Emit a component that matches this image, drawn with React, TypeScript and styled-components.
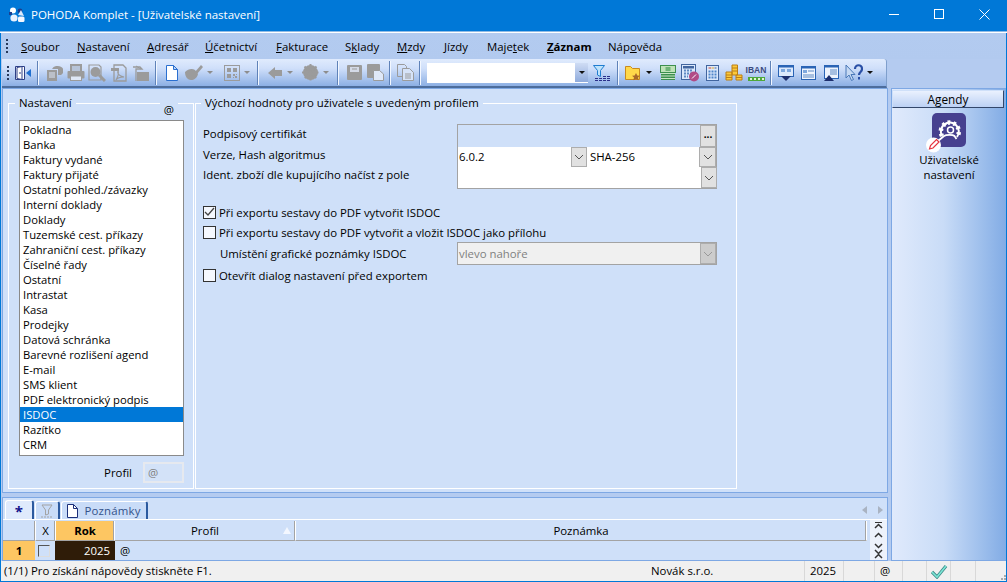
import React from 'react';
import styled, { createGlobalStyle } from 'styled-components';

const GlobalStyle = createGlobalStyle`
  html, body { margin: 0; padding: 0; overflow: hidden; background: #fff; }
  body { font-family: "Open Sans", "Noto Sans", "Liberation Sans", sans-serif; font-size: 11.4px; color: #000; }
  * { box-sizing: border-box; }
  fieldset { margin: 0; min-width: 0; }
`;

const Window = styled.div`
  width: 1007px;
  height: 582px;
  display: flex;
  flex-direction: column;
  border: 1px solid #0078d7;
  border-top: 0;
  background: #b4cbf0;
`;

const TitleBar = styled.div`
  height: 33px;
  margin: 0 -1px;
  display: flex;
  align-items: center;
  background: #0078d7;
  border-bottom: 1px solid #fff;
  box-shadow: inset 0 -1px 0 #8fbbe6;
  color: #fff;
  padding: 0 0 3px 9px;
`;

const TitleText = styled.span`
  margin-left: 6px;
  font-size: 11.5px;
  flex: 1;
`;

const WinButtons = styled.div`
  display: flex;
  align-items: center;
`;

const WinButton = styled.div`
  width: 45px;
  height: 20px;
  display: flex;
  align-items: center;
  justify-content: center;
`;

const MenuBar = styled.div`
  height: 26px;
  display: flex;
  align-items: center;
  padding-left: 5px;
  background: linear-gradient(#b3cbf0, #b2caef);
`;

const Grip = styled.div<{ $h: number }>`
  width: 2px;
  height: ${(p) => p.$h}px;
  background: repeating-linear-gradient(to bottom, #27395a 0 2px, transparent 2px 4px);
`;

const MenuItem = styled.div<{ $w: number; $bold?: boolean }>`
  width: ${(p) => p.$w}px;
  flex: none;
  font-weight: ${(p) => (p.$bold ? 700 : 400)};
  white-space: nowrap;
`;

const MenuList = styled.div`
  display: flex;
  margin-left: 13px;
`;

const ToolRow = styled.div`
  height: 29px;
  display: flex;
  padding-left: 1px;
`;

const Toolbar = styled.div`
  width: 885px;
  height: 29px;
  display: flex;
  align-items: center;
  background: linear-gradient(#e0ebfd, #cfdffa 35%, #8cafe4);
  border-bottom: 2px solid #4d6d9c;
  border-right: 1px solid #7f9fcc;
  border-radius: 0 3px 0 0;
`;

const ToolSlot = styled.div<{ $w: number; $ml?: number }>`
  width: ${(p) => p.$w}px;
  margin-left: ${(p) => p.$ml ?? 0}px;
  flex: none;
  height: 24px;
  display: flex;
  align-items: center;
  justify-content: center;
`;

const ToolSep = styled.div`
  width: 2px;
  height: 24px;
  background: linear-gradient(90deg, #5f82b8 50%, #f2f7ff 50%);
`;

const DropArrow = styled.div<{ $dark?: boolean }>`
  width: 0;
  height: 0;
  border-left: 3px solid transparent;
  border-right: 3px solid transparent;
  border-top: 3px solid ${(p) => (p.$dark ? '#111' : '#8d8d8d')};
`;

const SearchBox = styled.div`
  width: 161px;
  height: 20px;
  margin-left: 3px;
  flex: none;
  background: #fff;
  display: flex;
  justify-content: flex-end;
`;

const SearchButton = styled.div`
  width: 13px;
  display: flex;
  align-items: center;
  justify-content: center;
  background: linear-gradient(#cfdcf4, #8fabdc);
  border-bottom: 1px solid #fff;
`;

const Workspace = styled.div`
  flex: 1;
  min-height: 0;
  display: flex;
  padding-left: 1px;
`;

const MainColumn = styled.div`
  width: 886px;
  display: flex;
  flex-direction: column;
  gap: 4px;
`;

const Panel = styled.div`
  border: 1px solid #7ea8e4;
  background: #cfe0f9;
`;

const TopPanel = styled(Panel)`
  height: 405px;
  display: flex;
  padding: 6px 0 0 5px;
  gap: 1px;
`;

const Group = styled.fieldset<{ $w: number }>`
  width: ${(p) => p.$w}px;
  height: 394px;
  border: 1px solid #fff;
  padding: 0;
  position: relative;
  flex: none;
`;

const Legend = styled.legend<{ $ml: number }>`
  margin-left: ${(p) => p.$ml}px;
  padding: 0 4px;
  height: 16px;
  line-height: 16px;
  white-space: nowrap;
`;

const ProfileAt = styled.div`
  position: absolute;
  top: -9px;
  right: 15px;
  background: #cfe0f9;
  padding: 0 4px;
  line-height: 16px;
`;

const ListBox = styled.div`
  width: 165px;
  height: 336px;
  margin: 9px 0 0 10px;
  padding-top: 1px;
  background: #fff;
  border: 1px solid #8a8a8a;
`;

const ListItem = styled.div<{ $selected?: boolean }>`
  height: 15px;
  line-height: 15px;
  padding-left: 3px;
  font-size: 11.25px;
  white-space: nowrap;
  background: ${(p) => (p.$selected ? '#0078d7' : 'transparent')};
  color: ${(p) => (p.$selected ? '#fff' : '#000')};
`;

const ProfileRow = styled.div`
  display: flex;
  align-items: center;
  justify-content: flex-end;
  gap: 11px;
  margin: 6px 9px 0 0;
`;

const ProfileField = styled.div`
  width: 41px;
  height: 21px;
  border: 2px solid #e6e9ef;
  background: #d3e2f8;
  color: #808080;
  padding: 1px 0 0 3px;
`;

const FormBody = styled.div`
  padding: 13px 0 0 7px;
`;

const FieldsBlock = styled.div`
  display: flex;
`;

const LabelColumn = styled.div`
  width: 254px;
  display: flex;
  flex-direction: column;
`;

const Label = styled.div<{ $indent?: boolean; $mb?: number }>`
  height: 20px;
  line-height: 20px;
  white-space: nowrap;
  padding-left: ${(p) => (p.$indent ? 17 : 0)}px;
  margin-bottom: ${(p) => p.$mb ?? 0}px;
`;

const FieldBox = styled.div`
  width: 260px;
  height: 65px;
  border: 1px solid #a3a3a3;
  display: flex;
  flex-direction: column;
`;

const CertRow = styled.div`
  height: 22px;
  display: flex;
  justify-content: flex-end;
`;

const ValueRow = styled.div`
  height: 21px;
  display: flex;
  background: #fff;
  align-items: center;
  padding-left: 1px;
`;

const ValueText = styled.div<{ $w: number }>`
  width: ${(p) => p.$w}px;
  flex: none;
`;

const SquareButton = styled.div<{ $w?: number; $disabled?: boolean }>`
  width: ${(p) => p.$w ?? 16}px;
  height: 100%;
  flex: none;
  display: flex;
  align-items: center;
  justify-content: center;
  border: 1px solid #adadad;
  background: ${(p) => (p.$disabled ? '#cccccc' : '#e1e1e1')};
`;

const Dots = styled.div`
  font-weight: 700;
  font-size: 10px;
  line-height: 10px;
  margin-top: -3px;
`;

const ChecksBlock = styled.div`
  margin-top: 13px;
`;

const CheckRow = styled.div`
  height: 20px;
  display: flex;
  align-items: center;
  gap: 3px;
`;

const CheckBox = styled.div`
  width: 13px;
  height: 13px;
  flex: none;
  background: #f5f8fe;
  border: 1px solid #333;
  display: flex;
  align-items: center;
  justify-content: center;
`;

const SelectRow = styled.div`
  height: 23px;
  display: flex;
  align-items: center;
`;

const DisabledSelect = styled.div`
  width: 260px;
  height: 23px;
  border: 1px solid #a3a3a3;
  background: #f0f0f0;
  color: #808080;
  display: flex;
  align-items: center;
  justify-content: space-between;
  padding-left: 1px;
`;

const BottomPanel = styled(Panel)`
  flex: 1;
  display: flex;
  flex-direction: column;
`;

const TabStrip = styled.div`
  height: 22px;
  display: flex;
  align-items: flex-end;
  padding-left: 2px;
  gap: 1px;
  border-bottom: 1px solid #fff;
`;

const Tab = styled.div<{ $w: number; $active?: boolean }>`
  width: ${(p) => p.$w}px;
  height: ${(p) => (p.$active ? 19 : 18)}px;
  display: flex;
  align-items: center;
  justify-content: center;
  gap: 6px;
  border-top: 1px solid #fff;
  border-left: 1px solid #fff;
  border-right: 2px solid #2c5a9f;
  border-radius: 3px 3px 0 0;
  background: ${(p) => (p.$active ? '#dfeafc' : '#c9dcf8')};
  color: #33528a;
  letter-spacing: 0.2px;
`;

const TabStar = styled.span`
  color: #14148c;
  font-weight: 700;
  font-size: 15px;
  line-height: 15px;
  margin-top: 3px;
`;

const TabArrows = styled.div`
  margin: 0 4px 5px auto;
  display: flex;
  gap: 11px;
`;

const TabArrow = styled.div<{ $right?: boolean }>`
  width: 0;
  height: 0;
  border-top: 4px solid transparent;
  border-bottom: 4px solid transparent;
  ${(p) => (p.$right ? 'border-left: 5px solid #a9b3c2;' : 'border-right: 5px solid #a9b3c2;')}
`;

const GridWrap = styled.div`
  flex: 1;
  display: flex;
  min-height: 0;
`;

const Grid = styled.div`
  flex: 1;
  margin-top: 1px;
  display: grid;
  grid-template-columns: 33px 20px 59px 181px 571px;
  grid-template-rows: 20px 19px;
`;

const HeadCell = styled.div<{ $sorted?: boolean }>`
  display: flex;
  align-items: center;
  justify-content: center;
  position: relative;
  font-weight: ${(p) => (p.$sorted ? 700 : 400)};
  background: ${(p) => (p.$sorted ? '#fdc662' : '#cfe0f9')};
  border-right: 1px solid #fff;
  border-bottom: 1px solid #a3a3a3;
  box-shadow: inset -1px 0 0 #a3a3a3;
`;

const SortMark = styled.span`
  position: absolute;
  right: 4px;
  top: 6px;
  width: 0;
  height: 0;
  border-left: 4px solid transparent;
  border-right: 4px solid transparent;
  border-bottom: 7px solid #f3f7ff;
`;

const RowNumber = styled.div`
  background: #fdc662;
  font-weight: 700;
  display: flex;
  align-items: center;
  justify-content: center;
  margin-right: 1px;
`;

const RowCheck = styled.div`
  display: flex;
  align-items: center;
  padding-left: 2px;
`;

const RowCheckBox = styled(CheckBox)`
  width: 12px;
  height: 12px;
  background: #cfe0f9;
  border-color: #555 #ddd #ddd #555;
  border-width: 1.5px;
`;

const YearCell = styled.div`
  background: #2f1c08;
  color: #fff;
  text-align: right;
  padding-right: 5px;
  line-height: 19px;
  margin-left: -1px;
`;

const ProfileCell = styled.div`
  padding-left: 5px;
  line-height: 19px;
`;

const Scroller = styled.div`
  width: 17px;
  margin-left: 3px;
  background: #edf2fb;
  display: flex;
  align-items: center;
  justify-content: center;
`;

const AgendaPanel = styled(Panel)`
  width: 115px;
  margin-left: 3px;
  padding: 1px 0 0 0;
  border-right: 0;
  display: flex;
  flex-direction: column;
  align-items: center;
  background: linear-gradient(90deg, #e0eafc, #c9dcf7 45%, #82ace5);
`;

const AgendaHeader = styled.div`
  width: 112px;
  height: 18px;
  line-height: 17px;
  text-align: center;
  font-size: 11.8px;
  background: linear-gradient(#eaf1fe, #bcd1f4);
  border: 1px solid #cfe0f9;
  border-bottom: 1px solid #33476a;
  border-right: 1px solid #33476a;
  margin-left: -2px;
`;

const AgendaIcon = styled.div`
  margin-top: 5px;
  width: 46px;
  height: 39px;
`;

const AgendaLabel = styled.div`
  text-align: center;
  line-height: 15px;
`;

const StatusBar = styled.div`
  height: 20px;
  display: flex;
  align-items: center;
  background: #f0f0f0;
`;

const StatusCell = styled.div<{ $w: number; $pad?: number; $line?: boolean }>`
  width: ${(p) => p.$w}px;
  height: 20px;
  line-height: 20px;
  flex: none;
  padding-left: ${(p) => p.$pad ?? 0}px;
  border-left: ${(p) => (p.$line ? '1px solid #d8d8d8' : '0')};
  white-space: nowrap;
  display: flex;
  align-items: center;
`;

const GripCorner = styled.div`
  flex: 1;
  height: 20px;
  display: flex;
  align-items: flex-end;
  justify-content: flex-end;
`;

const gray = '#9b9b9b';

const Ic: React.FC<{ w?: number; h?: number; children: React.ReactNode }> = ({ w = 18, h = 18, children }) => (
  <svg width={w} height={h} viewBox={`0 0 ${w} ${h}`} fill="none">
    {children}
  </svg>
);

const AppLogo = () => (
  <Ic w={16} h={16}>
    <circle cx="4" cy="3.5" r="3" fill="#fff" />
    <circle cx="11" cy="4" r="2.4" fill="#1b3e8f" />
    <path d="M9 8l3-5 3 6z" fill="#dce8fa" />
    <circle cx="5" cy="11" r="3.6" fill="#eaf1fd" />
    <rect x="9" y="9.5" width="6.5" height="5.5" rx="1.5" fill="#f4f7ff" />
    <rect x="0" y="5" width="3" height="3" fill="#1b3e8f" />
  </Ic>
);

const DoorIcon = () => (
  <Ic>
    <path d="M1.5 2.5h9v13h-9z" fill="#fff" stroke="#2c3f86" />
    <path d="M3 3.5l5-1v13l-5-1z" fill="#fdfdfd" stroke="#2c3f86" />
    <rect x="5.5" y="8" width="1" height="2" fill="#2c3f86" />
    <path d="M12 9l5-4v8z" fill="#1f6fd0" />
  </Ic>
);

const CopySheetsIcon = () => (
  <Ic>
    <path d="M7 5a6 5 0 1 1 9 6h-3V5z" fill={gray} />
    <path d="M2 6h10v11H2z" fill={gray} />
    <path d="M4 9h6M4 11h6M4 13h6" stroke="#dbe5f6" />
  </Ic>
);

const PrinterIcon = () => (
  <Ic>
    <path d="M4 1h10v7H4z" fill="#b7c4d8" stroke={gray} strokeWidth="2" />
    <rect x="0.5" y="7" width="17" height="7.500" rx="1" fill={gray} />
    <rect x="3.500" y="12" width="11" height="4.500" fill="#dfe8f6" stroke={gray} />
  </Ic>
);

const PreviewIcon = () => (
  <Ic>
    <path d="M1 1h10l2 2v13H1z" stroke={gray} strokeWidth="1.200" />
    <circle cx="7.500" cy="8" r="5" fill={gray} />
    <path d="M11 11l6 6" stroke={gray} strokeWidth="3" />
  </Ic>
);

const PdfIcon = () => (
  <Ic>
    <path d="M4 1h9l3 3v13H4z" stroke={gray} strokeWidth="1.300" />
    <path d="M1 4h8v3H1z" fill={gray} />
    <path d="M8 6c-1 4 1 6 6 7-3 0-6 0-8 3 2-3 3-6 2-10z" stroke={gray} strokeWidth="1.200" />
  </Ic>
);

const MailDocIcon = () => (
  <Ic>
    <path d="M1 3h7l2 2H4v12" stroke={gray} strokeWidth="1.300" />
    <path d="M5 8h12v9H5z" fill={gray} />
    <path d="M4 2l5 3" stroke={gray} />
  </Ic>
);

const NewDocIcon = () => (
  <Ic w={14}>
    <path d="M1.500 1.500h7l4 4v11h-11z" fill="#fff" stroke="#2a6fd0" />
    <path d="M8.500 1.500v4h4z" fill="#bcd4f6" stroke="#2a6fd0" />
  </Ic>
);

const BrushIcon = () => (
  <Ic>
    <path d="M0 8c3-3 7-4 10-2l3 4c-1 4-4 6-7 6-4 0-6-4-6-8z" fill={gray} />
    <path d="M10 8l6-7 2 2-6 7z" fill={gray} />
  </Ic>
);

const QrIcon = () => (
  <Ic w={16} h={16}>
    <rect x="0.500" y="0.500" width="15" height="15" stroke={gray} />
    <path d="M3 3h4v4H3zM9 3h4v4H9zM3 9h4v4H3z" fill={gray} />
    <path d="M9 9h2v2H9zM12 9h1v1h-1zM11 11h2v2h-2zM9 12h1v1H9z" fill={gray} />
  </Ic>
);

const BackIcon = () => (
  <Ic w={14} h={14}>
    <path d="M0 7l7-6v3h7v6H7v3z" fill={gray} />
  </Ic>
);

const GearBlobIcon = () => (
  <Ic w={17} h={17}>
    <circle cx="8.500" cy="8.500" r="7.500" fill={gray} />
    <path d="M8.500 0v17M0 8.500h17M2.500 2.500l12 12M14.500 2.500l-12 12" stroke={gray} strokeWidth="2" strokeDasharray="2.500 1" />
  </Ic>
);

const SaveIcon = () => (
  <Ic w={15} h={15}>
    <path d="M0 1a1 1 0 0 1 1-1h13a1 1 0 0 1 1 1v13a1 1 0 0 1-1 1H1a1 1 0 0 1-1-1z" fill={gray} />
    <path d="M3 2h9v5H3z" fill="#e2eafa" opacity="0.8" />
    <path d="M5 4h5" stroke={gray} />
  </Ic>
);

const SaveAsIcon = () => (
  <Ic w={17} h={17}>
    <rect x="0" y="0" width="13" height="14" rx="1" fill={gray} />
    <path d="M6.500 6.500h6l4 3.500v6.500h-10z" fill="#dfe8f8" stroke={gray} />
  </Ic>
);

const DocsIcon = () => (
  <Ic w={17} h={17}>
    <path d="M0.500 0.500h7l2 2v10h-9z" stroke={gray} />
    <path d="M5.500 4.500h7l4 4v8h-11z" fill="#d6e3f8" stroke={gray} />
    <path d="M8 10h6M8 12h6M8 14h6" stroke={gray} />
  </Ic>
);

const FilterIcon = () => (
  <Ic>
    <path d="M0.500 1.500h11l-4 5v6l-3-1.500V6.500z" fill="#bfe3fb" stroke="#1f7dd0" />
    <path d="M2 14.500h15M2 16.500h15" stroke="#2a2f8a" strokeDasharray="3 1" />
    <path d="M10 12.500h7" stroke="#2a2f8a" strokeDasharray="3 1" />
  </Ic>
);

const FolderIcon = () => (
  <Ic w={16} h={16}>
    <path d="M0.500 1.500h5l2 2h7v11h-14z" fill="#ffd84a" stroke="#c98a1d" />
    <path d="M11 8l1.300 2.500 2.700.3-2 1.800.6 2.700-2.600-1.400-2.600 1.400.6-2.700-2-1.800 2.700-.3z" fill="#a8682a" />
  </Ic>
);

const MoneyIcon = () => (
  <Ic w={16} h={16}>
    <path d="M1 6h14v9H1z" fill="#3d8f4f" />
    <path d="M1 8.500h14M1 11h14M1 13.500h14" stroke="#c9e6c4" />
    <rect x="0.500" y="0.500" width="15" height="7" fill="#bfe2b8" stroke="#3d8f4f" />
    <rect x="5.500" y="2" width="5" height="4" fill="#6fb477" />
  </Ic>
);

const CalcPercentIcon = () => (
  <Ic>
    <rect x="0.500" y="0.500" width="14" height="15" fill="#dbe8fb" stroke="#41659f" />
    <rect x="2" y="2" width="11" height="2.500" fill="#41659f" />
    <path d="M3 6.500h9M3 9.500h9M3 12.500h4" stroke="#5f8ac4" strokeWidth="2" strokeDasharray="2 1" />
    <circle cx="13" cy="12.500" r="5" fill="#b14b86" />
    <path d="M11 14.500l4-4" stroke="#fff" />
  </Ic>
);

const CalcIcon = () => (
  <Ic w={13} h={16}>
    <rect x="0.500" y="0.500" width="12" height="15" fill="#dbe8fb" stroke="#41659f" />
    <path d="M2.500 3h2.500" stroke="#d0453b" />
    <path d="M5.500 3h2.500" stroke="#e3a92a" />
    <path d="M8.500 3h2" stroke="#41659f" />
    <path d="M2.500 6.500h8M2.500 9.500h8M2.500 12.500h8" stroke="#4f85c9" strokeWidth="2" strokeDasharray="2 1" />
  </Ic>
);

const CoinsIcon = () => (
  <Ic>
    <path d="M7 1h5.500v10H7zM1 8h6v8H1zM11 11h6v5h-6z" fill="#fcc93a" stroke="#bb7e15" />
    <path d="M7 4h5.500M7 7h5.500M1 11h6M1 13.500h6M11 13.500h6" stroke="#bb7e15" />
  </Ic>
);

const IbanLabel = styled.div`
  width: 18px;
  height: 16px;
  display: flex;
  flex-direction: column;
  align-items: center;
  font-family: "Liberation Sans", sans-serif;
  font-size: 8.5px;
  line-height: 11px;
  font-weight: 700;
  color: #3a4a80;
  white-space: nowrap;
`;

const IbanBar = styled.div`
  width: 17px;
  height: 4px;
  margin-top: 1px;
  background: repeating-linear-gradient(90deg, #4ea83a 0 1px, #dff2d5 1px 3px, #4ea83a 3px 4px);
  border: 1px solid #4ea83a;
`;

const IbanIcon = () => (
  <IbanLabel>
    IBAN
    <IbanBar />
  </IbanLabel>
);

const WinDownIcon = () => (
  <Ic w={16} h={16}>
    <rect x="0.500" y="0.500" width="15" height="11" fill="#dce9fc" stroke="#2a64b5" />
    <rect x="0" y="0" width="16" height="2.500" fill="#2a64b5" />
    <rect x="3" y="4" width="4" height="3" fill="#7ea8de" />
    <rect x="9" y="4" width="4" height="3" fill="#7ea8de" />
    <path d="M3 11h10l-5 5z" fill="#1d2f6e" />
  </Ic>
);

const WinListIcon = () => (
  <Ic w={15} h={14}>
    <rect x="0.500" y="0.500" width="14" height="13" fill="#eef4fd" stroke="#2a64b5" />
    <rect x="0" y="0" width="15" height="2.500" fill="#2a64b5" />
    <rect x="2" y="4" width="4" height="3" fill="#7ea8de" />
    <path d="M7 5h6M2 9h11M2 11h11" stroke="#5f8ac4" />
  </Ic>
);

const WinUpIcon = () => (
  <Ic w={16} h={16}>
    <rect x="1.500" y="0.500" width="14" height="13" fill="#eef4fd" stroke="#2a64b5" />
    <rect x="1" y="0" width="15" height="2.500" fill="#2a64b5" />
    <path d="M7 5h7M7 7h7M7 9h7" stroke="#5f8ac4" />
    <path d="M1 16l5-6 5 6z" fill="#1d2f6e" />
  </Ic>
);

const HelpIcon = () => (
  <Ic>
    <path d="M1 1v13l3-3 2.500 5.500 2-1-2.500-5h4z" fill="#c6d9f3" stroke="#4a79b8" />
    <path d="M10 5c0-5 7-5 7 0 0 3-3 3-3 6" stroke="#2a50a6" strokeWidth="2.200" />
    <rect x="13" y="13" width="2" height="2.500" fill="#2a50a6" />
  </Ic>
);

const Chevron: React.FC<{ color?: string }> = ({ color = '#555' }) => (
  <svg width="10" height="6" viewBox="0 0 10 6" fill="none">
    <path d="M1 1l4 4 4-4" stroke={color} />
  </svg>
);

const CheckMark = () => (
  <svg width="11" height="10" viewBox="0 0 11 10" fill="none">
    <path d="M1 5l3 3 6-7" stroke="#444" strokeWidth="1.300" />
  </svg>
);

const AgendaGraphic = () => (
  <svg width="46" height="40" viewBox="0 0 46 40" fill="none">
    <rect x="6" y="0" width="34" height="34" rx="5" fill="#46408f" />
    <path d="M16 23a9 9 0 1 1 15 1" stroke="#fff" strokeWidth="2" />
    <path d="M16 23a9 9 0 1 1 15 1" stroke="#fff" strokeWidth="4.500" strokeDasharray="2.500 3" />
    <path d="M18 13a6 6 0 0 1 4-3" stroke="#fff" strokeWidth="1.300" />
    <circle cx="24.500" cy="17" r="3" stroke="#fff" strokeWidth="1.500" />
    <path d="M12 28l6-5c2-1.500 9-1.500 10.500 0l2 3" stroke="#fff" strokeWidth="1.800" />
    <circle cx="7.500" cy="32" r="7.500" fill="#fff" />
    <path d="M3.500 36l1-3.500 6-6 2.500 2.500-6 6z" fill="#fff" stroke="#e5323f" strokeWidth="1.200" />
  </svg>
);

const ScrollGraphic = () => (
  <svg width="9" height="37" viewBox="0 0 9 37" fill="none">
    <path d="M1 0.500h7" stroke="#333" />
    <path d="M1 6l3.500-3.500L8 6" stroke="#333" strokeWidth="1.500" />
    <path d="M1 15l3.500-3.500L8 15" stroke="#333" strokeWidth="1.500" />
    <path d="M1 22l3.500 3.500L8 22" stroke="#333" strokeWidth="1.500" />
    <path d="M1 28l3.500 3.500L8 28M1 36l3.500-3.500L8 36" stroke="#333" strokeWidth="1.500" />
  </svg>
);

const StatusCheck = () => (
  <svg width="17" height="15" viewBox="0 0 17 15" fill="none">
    <path d="M1 8l5 5 9-11" stroke="#3d8a88" strokeWidth="3.200" />
    <path d="M1 8l5 5 9-11" stroke="#7ce6d6" strokeWidth="1.600" />
  </svg>
);

const GripDots = () => (
  <svg width="10" height="10" viewBox="0 0 10 10" fill="#a9a9a9">
    <rect x="7" y="1" width="2" height="2" />
    <rect x="4" y="4" width="2" height="2" />
    <rect x="7" y="4" width="2" height="2" />
    <rect x="1" y="7" width="2" height="2" />
    <rect x="4" y="7" width="2" height="2" />
    <rect x="7" y="7" width="2" height="2" />
  </svg>
);

const menu: { label: React.ReactNode; w: number; bold?: boolean }[] = [
  { label: <><u>S</u>oubor</>, w: 56 },
  { label: <><u>N</u>astavení</>, w: 70 },
  { label: <><u>A</u>dresář</>, w: 58 },
  { label: <><u>Ú</u>četnictví</>, w: 71 },
  { label: <><u>F</u>akturace</>, w: 69 },
  { label: <>S<u>k</u>lady</>, w: 52 },
  { label: <><u>M</u>zdy</>, w: 47 },
  { label: <><u>J</u>ízdy</>, w: 43 },
  { label: <>Maje<u>t</u>ek</>, w: 60 },
  { label: <><u>Z</u>áznam</>, w: 61, bold: true },
  { label: <>Náp<u>o</u>věda</>, w: 70 },
];

const settings = [
  'Pokladna', 'Banka', 'Faktury vydané', 'Faktury přijaté', 'Ostatní pohled./závazky', 'Interní doklady',
  'Doklady', 'Tuzemské cest. příkazy', 'Zahraniční cest. příkazy', 'Číselné řady', 'Ostatní', 'Intrastat',
  'Kasa', 'Prodejky', 'Datová schránka', 'Barevné rozlišení agend', 'E-mail', 'SMS klient',
  'PDF elektronický podpis', 'ISDOC', 'Razítko', 'CRM',
];

const App: React.FC = () => (
  <>
    <GlobalStyle />
    <Window>
      <TitleBar>
        <AppLogo />
        <TitleText>POHODA Komplet - [Uživatelské nastavení]</TitleText>
        <WinButtons>
          <WinButton>
            <svg width="11" height="11" fill="none"><path d="M0 5.500h10" stroke="#fff" /></svg>
          </WinButton>
          <WinButton>
            <svg width="11" height="11" fill="none"><rect x="0.500" y="0.500" width="9" height="9" stroke="#fff" /></svg>
          </WinButton>
          <WinButton>
            <svg width="11" height="11" fill="none"><path d="M0.500 0.500l10 10M10.500 0.500l-10 10" stroke="#fff" /></svg>
          </WinButton>
        </WinButtons>
      </TitleBar>

      <MenuBar>
        <Grip $h={14} />
        <MenuList>
          {menu.map((m, i) => (
            <MenuItem key={i} $w={m.w} $bold={m.bold}>{m.label}</MenuItem>
          ))}
        </MenuList>
      </MenuBar>

      <ToolRow>
        <Toolbar>
          <ToolSlot $w={11}><Grip $h={14} /></ToolSlot>
          <ToolSlot $w={20}><DoorIcon /></ToolSlot>
          <ToolSlot $w={10}><ToolSep /></ToolSlot>
          <ToolSlot $w={22}><CopySheetsIcon /></ToolSlot>
          <ToolSlot $w={21}><PrinterIcon /></ToolSlot>
          <ToolSlot $w={22}><PreviewIcon /></ToolSlot>
          <ToolSlot $w={22}><PdfIcon /></ToolSlot>
          <ToolSlot $w={21}><MailDocIcon /></ToolSlot>
          <ToolSlot $w={9}><ToolSep /></ToolSlot>
          <ToolSlot $w={23}><NewDocIcon /></ToolSlot>
          <ToolSlot $w={22}><BrushIcon /></ToolSlot>
          <ToolSlot $w={9}><DropArrow /></ToolSlot>
          <ToolSlot $w={22} $ml={7}><QrIcon /></ToolSlot>
          <ToolSlot $w={8}><DropArrow /></ToolSlot>
          <ToolSlot $w={13}><ToolSep /></ToolSlot>
          <ToolSlot $w={21}><BackIcon /></ToolSlot>
          <ToolSlot $w={10}><DropArrow /></ToolSlot>
          <ToolSlot $w={22} $ml={4}><GearBlobIcon /></ToolSlot>
          <ToolSlot $w={10}><DropArrow /></ToolSlot>
          <ToolSlot $w={13}><ToolSep /></ToolSlot>
          <ToolSlot $w={20}><SaveIcon /></ToolSlot>
          <ToolSlot $w={22}><SaveAsIcon /></ToolSlot>
          <ToolSlot $w={8}><ToolSep /></ToolSlot>
          <ToolSlot $w={22}><DocsIcon /></ToolSlot>
          <ToolSlot $w={8}><ToolSep /></ToolSlot>
          <SearchBox>
            <SearchButton><DropArrow $dark /></SearchButton>
          </SearchBox>
          <ToolSlot $w={24} $ml={2}><FilterIcon /></ToolSlot>
          <ToolSlot $w={7}><ToolSep /></ToolSlot>
          <ToolSlot $w={24}><FolderIcon /></ToolSlot>
          <ToolSlot $w={8}><DropArrow $dark /></ToolSlot>
          <ToolSlot $w={22} $ml={4}><MoneyIcon /></ToolSlot>
          <ToolSlot $w={22}><CalcPercentIcon /></ToolSlot>
          <ToolSlot $w={22}><CalcIcon /></ToolSlot>
          <ToolSlot $w={22}><CoinsIcon /></ToolSlot>
          <ToolSlot $w={22}><IbanIcon /></ToolSlot>
          <ToolSlot $w={8}><ToolSep /></ToolSlot>
          <ToolSlot $w={22}><WinDownIcon /></ToolSlot>
          <ToolSlot $w={22}><WinListIcon /></ToolSlot>
          <ToolSlot $w={23}><WinUpIcon /></ToolSlot>
          <ToolSlot $w={23}><HelpIcon /></ToolSlot>
          <ToolSlot $w={9}><DropArrow $dark /></ToolSlot>
        </Toolbar>
      </ToolRow>

      <Workspace>
        <MainColumn>
          <TopPanel>
            <Group $w={186}>
              <Legend $ml={6}>Nastavení</Legend>
              <ProfileAt>@</ProfileAt>
              <ListBox>
                {settings.map((s) => (
                  <ListItem key={s} $selected={s === 'ISDOC'}>{s}</ListItem>
                ))}
              </ListBox>
              <ProfileRow>
                Profil
                <ProfileField>@</ProfileField>
              </ProfileRow>
            </Group>
            <Group $w={542}>
              <Legend $ml={5}>Výchozí hodnoty pro uživatele s uvedeným profilem</Legend>
              <FormBody>
                <FieldsBlock>
                  <LabelColumn>
                    <Label $mb={1}>Podpisový certifikát</Label>
                    <Label>Verze, Hash algoritmus</Label>
                    <Label>Ident. zboží dle kupujícího načíst z pole</Label>
                  </LabelColumn>
                  <FieldBox>
                    <CertRow>
                      <SquareButton><Dots>...</Dots></SquareButton>
                    </CertRow>
                    <ValueRow>
                      <ValueText $w={112}>6.0.2</ValueText>
                      <SquareButton><Chevron /></SquareButton>
                      <ValueText $w={112}>&nbsp;SHA-256</ValueText>
                      <SquareButton $w={17}><Chevron /></SquareButton>
                    </ValueRow>
                    <ValueRow>
                      <ValueText $w={242} />
                      <SquareButton><Chevron /></SquareButton>
                    </ValueRow>
                  </FieldBox>
                </FieldsBlock>
                <ChecksBlock>
                  <CheckRow><CheckBox><CheckMark /></CheckBox>Při exportu sestavy do PDF vytvořit ISDOC</CheckRow>
                  <CheckRow><CheckBox />Při exportu sestavy do PDF vytvořit a vložit ISDOC jako přílohu</CheckRow>
                  <SelectRow>
                    <LabelColumn><Label $indent>Umístění grafické poznámky ISDOC</Label></LabelColumn>
                    <DisabledSelect>
                      vlevo nahoře
                      <SquareButton $disabled><Chevron color="#999" /></SquareButton>
                    </DisabledSelect>
                  </SelectRow>
                  <CheckRow><CheckBox />Otevřít dialog nastavení před exportem</CheckRow>
                </ChecksBlock>
              </FormBody>
            </Group>
          </TopPanel>

          <BottomPanel>
            <TabStrip>
              <Tab $w={29} $active><TabStar>*</TabStar></Tab>
              <Tab $w={25}>
                <svg width="12" height="14" viewBox="0 0 12 14" fill="none">
                  <path d="M1 1h10L7.500 6v4l-3 1V6z" stroke="#a3a3a3" />
                  <path d="M0 13h12" stroke="#a3a3a3" strokeDasharray="2 1" />
                </svg>
              </Tab>
              <Tab $w={87}>
                <svg width="11" height="14" viewBox="0 0 11 14" fill="none">
                  <path d="M0.500 0.500h6l4 4v9h-10z" fill="#fff" stroke="#1b2f7a" />
                  <path d="M6.500 0.500v4h4" stroke="#1b2f7a" />
                </svg>
                Poznámky
              </Tab>
              <TabArrows>
                <TabArrow />
                <TabArrow $right />
              </TabArrows>
            </TabStrip>
            <GridWrap>
              <Grid>
                <HeadCell />
                <HeadCell>X</HeadCell>
                <HeadCell $sorted>Rok</HeadCell>
                <HeadCell>Profil<SortMark /></HeadCell>
                <HeadCell>Poznámka</HeadCell>
                <RowNumber>1</RowNumber>
                <RowCheck><RowCheckBox /></RowCheck>
                <YearCell>2025</YearCell>
                <ProfileCell>@</ProfileCell>
              </Grid>
              <Scroller><ScrollGraphic /></Scroller>
            </GridWrap>
          </BottomPanel>
        </MainColumn>

        <AgendaPanel>
          <AgendaHeader>Agendy</AgendaHeader>
          <AgendaIcon><AgendaGraphic /></AgendaIcon>
          <AgendaLabel>Uživatelské<br />nastavení</AgendaLabel>
        </AgendaPanel>
      </Workspace>

      <StatusBar>
        <StatusCell $w={644} $pad={3}>(1/1) Pro získání nápovědy stiskněte F1.</StatusCell>
        <StatusCell $w={159} $pad={6}>Novák s.r.o.</StatusCell>
        <StatusCell $w={39} $pad={5} $line>2025</StatusCell>
        <StatusCell $w={31} $line />
        <StatusCell $w={28} $pad={5} $line>@</StatusCell>
        <StatusCell $w={24} $line />
        <StatusCell $w={24} $pad={4} $line><StatusCheck /></StatusCell>
        <StatusCell $w={25} $line />
        <StatusCell $w={25} $line />
        <GripCorner><GripDots /></GripCorner>
      </StatusBar>
    </Window>
  </>
);

export default App;
